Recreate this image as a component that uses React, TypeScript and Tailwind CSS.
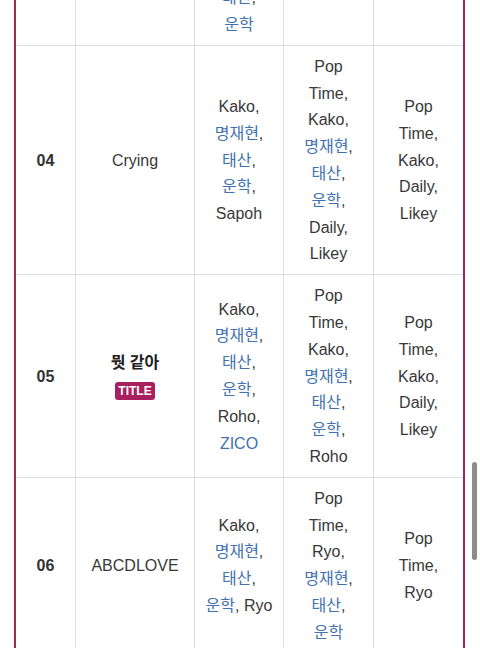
import type { ReactNode } from 'react';

const NAME_RE = /(명재현|태산|운학|ZICO)/;

const renderLine = (text: string) =>
  text.split(NAME_RE).map((part, i) =>
    NAME_RE.test(part) ? (
      <span key={i} className="text-[#3f72ae]">
        {part}
      </span>
    ) : (
      <span key={i}>{part}</span>
    )
  );

type Row = {
  no: string;
  title: ReactNode;
  lyrics: string[];
  composer: string[];
  arrange: string[];
};

const rows: Row[] = [
  {
    no: '03',
    title: 'Moonlight',
    lyrics: ['Kako,', '명재현,', 'Daily,', 'Likey,', '태산,', '운학'],
    composer: ['Pop', 'Time,', 'Kako'],
    arrange: ['Pop', 'Time,', 'Kako'],
  },
  {
    no: '04',
    title: 'Crying',
    lyrics: ['Kako,', '명재현,', '태산,', '운학,', 'Sapoh'],
    composer: ['Pop', 'Time,', 'Kako,', '명재현,', '태산,', '운학,', 'Daily,', 'Likey'],
    arrange: ['Pop', 'Time,', 'Kako,', 'Daily,', 'Likey'],
  },
  {
    no: '05',
    title: (
      <div className="flex flex-col items-center">
        <span className="font-bold text-[#222]">뭣 같아</span>
        <span className="mt-[6px] mb-[4px] h-[18px] rounded-[3px] bg-[#a8215e] px-[3px] text-[12px] leading-[18px] font-bold text-white">
          TITLE
        </span>
      </div>
    ),
    lyrics: ['Kako,', '명재현,', '태산,', '운학,', 'Roho,', 'ZICO'],
    composer: ['Pop', 'Time,', 'Kako,', '명재현,', '태산,', '운학,', 'Roho'],
    arrange: ['Pop', 'Time,', 'Kako,', 'Daily,', 'Likey'],
  },
  {
    no: '06',
    title: 'ABCDLOVE',
    lyrics: ['Kako,', '명재현,', '태산,', '운학, Ryo'],
    composer: ['Pop', 'Time,', 'Ryo,', '명재현,', '태산,', '운학'],
    arrange: ['Pop', 'Time,', 'Ryo'],
  },
];

const cell = 'border-b border-r border-[#dedede] px-1 pt-[8px] pb-[6px] text-center align-middle';

function Lines({ items }: { items: string[] }) {
  return (
    <>
      {items.map((line, i) => (
        <div key={i} className="whitespace-nowrap">
          {renderLine(line)}
        </div>
      ))}
    </>
  );
}

export default function App() {
  return (
    <div
      className="relative h-[648px] w-[480px] overflow-hidden bg-white text-[16px] leading-[26.8px] text-[#383838]"
      style={{ fontFamily: '"Liberation Sans", "Noto Sans CJK KR", sans-serif' }}
    >
      <div className="ml-[14px] mr-[15px] -mt-[130px] border-x-2 border-[#a0285f]">
        <table className="w-full table-fixed border-separate border-spacing-0">
          <colgroup>
            <col className="w-[60px]" />
            <col className="w-[119px]" />
            <col className="w-[89px]" />
            <col className="w-[90px]" />
            <col className="w-[89px]" />
          </colgroup>
          <tbody>
            {rows.map(row => (
              <tr key={row.no}>
                <td className={`${cell} font-bold text-[#333]`}>{row.no}</td>
                <td className={cell}>{row.title}</td>
                <td className={cell}>
                  <Lines items={row.lyrics} />
                </td>
                <td className={cell}>
                  <Lines items={row.composer} />
                </td>
                <td className={`${cell} border-r-0`}>
                  <Lines items={row.arrange} />
                </td>
              </tr>
            ))}
          </tbody>
        </table>
      </div>

      <div className="absolute right-[3px] top-[462px] h-[98px] w-[5px] rounded-full bg-[#8c8c8c]" />
    </div>
  );
}
